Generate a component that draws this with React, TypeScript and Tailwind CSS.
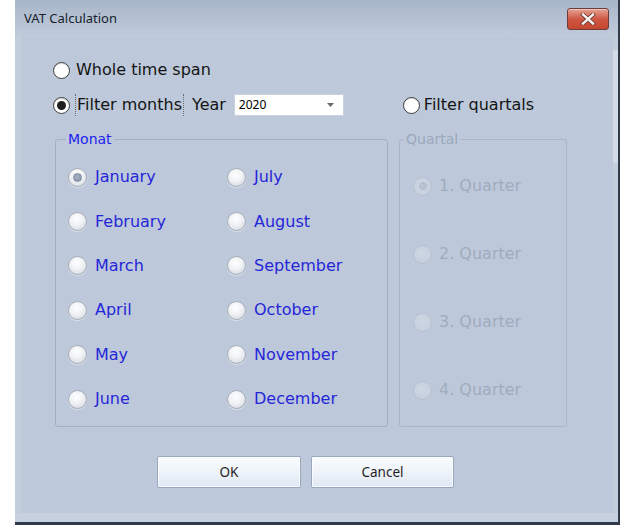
import React from "react";

const months: [string, string][] = [
  ["January", "July"],
  ["February", "August"],
  ["March", "September"],
  ["April", "October"],
  ["May", "November"],
  ["June", "December"],
];

const quarters = ["1. Quarter", "2. Quarter", "3. Quarter", "4. Quarter"];

function ClassicRadio({ checked }: { checked?: boolean }) {
  return (
    <span className="flex items-center justify-center w-[17px] h-[17px] shrink-0 rounded-full border-[1.5px] border-[#3d3d3d] bg-white shadow-[inset_0_1px_1px_rgba(0,0,0,0.15)]">
      {checked && <span className="w-[9px] h-[9px] rounded-full bg-[#1f1f1f]" />}
    </span>
  );
}

function GlossRadio({ checked, disabled }: { checked?: boolean; disabled?: boolean }) {
  if (disabled) {
    return (
      <span className="flex items-center justify-center w-[19px] h-[19px] shrink-0 rounded-full border border-[#b6c1d1] bg-[radial-gradient(circle_at_45%_40%,#cdd6e3_0%,#c4cedc_100%)]">
        {checked && <span className="w-[8px] h-[8px] rounded-full bg-[#b9c3d2] border border-[#b2bccc]" />}
      </span>
    );
  }
  return (
    <span className="flex items-center justify-center w-[19px] h-[19px] shrink-0 rounded-full border border-[#a8aeb9] bg-[radial-gradient(circle_at_45%_35%,#ffffff_0%,#eff1f4_45%,#cdd2d9_100%)] shadow-[0_1px_1px_rgba(255,255,255,0.5)]">
      {checked && (
        <span className="w-[9px] h-[9px] rounded-full border border-[#7d8aa0] bg-[radial-gradient(circle_at_45%_40%,#a8b3c4_0%,#8593a9_100%)]" />
      )}
    </span>
  );
}

function CloseButton() {
  return (
    <div className="w-[42px] h-[22px] rounded-[3px] border border-[#6e3d39] bg-gradient-to-b from-[#e3a293] via-[#cf5741] to-[#c4472f] flex items-center justify-center shadow-[inset_0_1px_0_rgba(255,255,255,0.4)]">
      <svg width="16" height="12" viewBox="0 0 16 12">
        <path d="M3 1.5 L13 10.5 M13 1.5 L3 10.5" stroke="#6b3a34" strokeWidth="4" strokeLinecap="square" />
        <path d="M3 1.5 L13 10.5 M13 1.5 L3 10.5" stroke="#f6f2f2" strokeWidth="2.4" strokeLinecap="square" />
      </svg>
    </div>
  );
}

function Button({ label, w }: { label: string; w: string }) {
  return (
    <div
      className={`${w} h-[32px] rounded-[2px] border border-[#98a8bf] bg-gradient-to-b from-[#fafcfe] via-[#eef3fa] to-[#dfe8f4] shadow-[inset_0_0_0_1px_rgba(255,255,255,0.7)] flex items-center justify-center text-[13.5px] text-[#1e1e1e] font-['Noto_Sans',sans-serif]`}
    >
      {label}
    </div>
  );
}

export default function App() {
  return (
    <div className="w-[639px] h-[528px] bg-white overflow-hidden font-['DejaVu_Sans',sans-serif]">
      <div className="ml-[15px] w-[605px] h-[525px] flex flex-col bg-[#c4cfde] border-r-2 border-b-[3px] border-[#303a4a]">
        {/* title bar */}
        <div className="h-[37px] shrink-0 flex items-center justify-between pl-[9px] pr-[9px] bg-gradient-to-b from-[#a8b6ca] to-[#c1ccdb]">
          <span className="text-[13px] text-[#161e2b] font-['Noto_Sans',sans-serif] mt-[1px]">VAT Calculation</span>
          <CloseButton />
        </div>
        <div className="flex h-[476px]">
          <div className="w-[7px] bg-[#c3cedd]" />
          {/* client area */}
          <div className="w-[591px] bg-[#bdc9da] flex flex-col pt-[21px] text-[16px] text-[#141414]">
            <div className="h-[24px] flex items-center pl-[31px]">
              <ClassicRadio />
              <span className="ml-[6px]">Whole time span</span>
            </div>
            <div className="h-[24px] mt-[11px] flex items-center pl-[31px]">
              <ClassicRadio checked />
              <span className="ml-[5px] px-[1px] border-x border-dotted border-[#6b6b6b] leading-[22px]">Filter months</span>
              <span className="ml-[8px]">Year</span>
              <div className="ml-[8px] w-[110px] h-[22px] bg-white border border-[#c9d2df] flex items-center justify-between pl-[4px] pr-[9px]">
                <span className="text-[12px] text-black font-['Noto_Sans',sans-serif]">2020</span>
                <svg width="7" height="4" viewBox="0 0 7 4">
                  <path d="M0 0 L7 0 L3.5 4 Z" fill="#6a6a6a" />
                </svg>
              </div>
              <div className="ml-[59px] flex items-center">
                <ClassicRadio />
                <span className="ml-[4px]">Filter quartals</span>
              </div>
            </div>

            <div className="flex mt-[13px] pl-[33px] gap-[11px]">
              <fieldset className="w-[333px] h-[297px] border border-[#a2b0c4] rounded-[3px]">
                <legend className="ml-[10px] px-[2px] text-[14px] leading-[18px] text-[#2121f0]">Monat</legend>
                <div className="grid grid-cols-[159px_1fr] auto-rows-[44.4px] pl-[12px] pt-[7px]">
                  {months.map(([a, b]) => (
                    <React.Fragment key={a}>
                      <div className="flex items-center">
                        <GlossRadio checked={a === "January"} />
                        <span className="ml-[8px] text-[#2626d9]">{a}</span>
                      </div>
                      <div className="flex items-center">
                        <GlossRadio />
                        <span className="ml-[8px] text-[#2626d9]">{b}</span>
                      </div>
                    </React.Fragment>
                  ))}
                </div>
              </fieldset>
              <fieldset className="w-[168px] h-[297px] border border-[#a9b6c9] rounded-[3px]">
                <legend className="ml-[4px] px-[2px] text-[14px] leading-[18px] text-[#9ba8bb]">Quartal</legend>
                <div className="flex flex-col pl-[13px] pt-[4px]">
                  {quarters.map((q, i) => (
                    <div key={q} className="h-[68px] flex items-center">
                      <GlossRadio disabled checked={i === 0} />
                      <span className="ml-[7px] text-[#a0acbe]">{q}</span>
                    </div>
                  ))}
                </div>
              </fieldset>
            </div>

            <div className="flex pl-[135px] gap-[10px] mt-[29px]">
              <Button label="OK" w="w-[144px]" />
              <Button label="Cancel" w="w-[143px]" />
            </div>
          </div>
          <div className="w-[5px] bg-[#c3cedd] flex flex-col">
            <div className="mt-[13px] h-[113px] bg-[#d3dbe6]" />
          </div>
        </div>
        <div className="h-[9px] bg-[#c6d0de]" />
      </div>
    </div>
  );
}
